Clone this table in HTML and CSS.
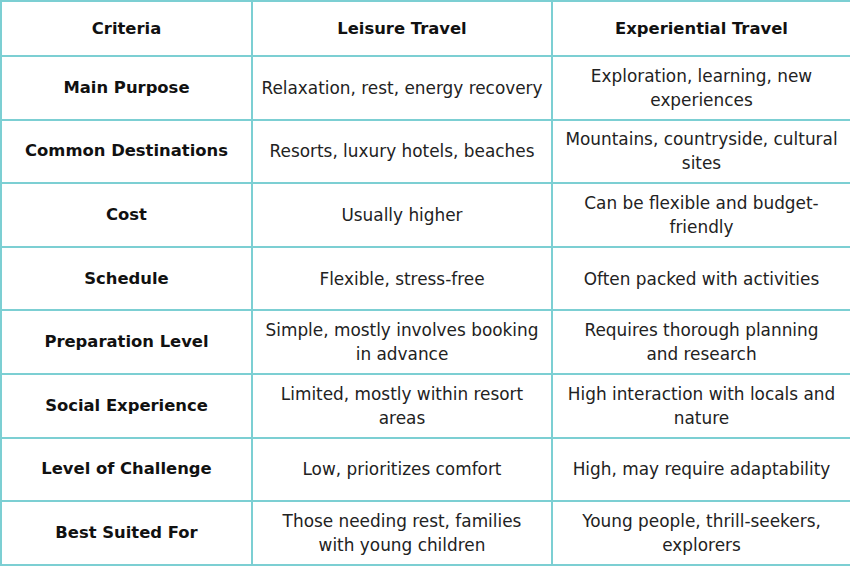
FILE: index.html
```html
<!DOCTYPE html>
<html>
<head>
<meta charset="utf-8">
<link rel="stylesheet" href="styles.css">
</head>
<body>
<table class="cmp">
  <colgroup><col class="c1"><col class="c2"><col class="c3"></colgroup>
  <thead>
    <tr class="head"><th>Criteria</th><th>Leisure Travel</th><th>Experiential Travel</th></tr>
  </thead>
  <tbody>
    <tr><th>Main Purpose</th><td>Relaxation, rest, energy recovery</td><td>Exploration, learning, new experiences</td></tr>
    <tr><th>Common Destinations</th><td>Resorts, luxury hotels, beaches</td><td>Mountains, countryside, cultural sites</td></tr>
    <tr><th>Cost</th><td>Usually higher</td><td>Can be flexible and budget-friendly</td></tr>
    <tr><th>Schedule</th><td>Flexible, stress-free</td><td>Often packed with activities</td></tr>
    <tr><th>Preparation Level</th><td>Simple, mostly involves booking in advance</td><td>Requires thorough planning and&nbsp;research</td></tr>
    <tr><th>Social Experience</th><td>Limited, mostly within resort areas</td><td>High interaction with locals and nature</td></tr>
    <tr><th>Level of Challenge</th><td>Low, prioritizes comfort</td><td>High, may require adaptability</td></tr>
    <tr><th>Best Suited For</th><td>Those needing rest, families with&nbsp;young children</td><td>Young people, thrill-seekers, explorers</td></tr>
  </tbody>
</table>
</body>
</html>
```

FILE: styles.css
```css
html, body { margin: 0; padding: 0; background: #fff; }
.cmp {
  width: 850px;
  border-collapse: collapse;
  table-layout: fixed;
  font-family: "DejaVu Sans", "Open Sans", sans-serif;
  font-size: 16.9px;
  line-height: 24px;
  color: #222;
}
.c1 { width: 251px; }
.c2 { width: 300px; }
.c3 { width: 299px; }
.cmp th, .cmp td {
  border: 2px solid #7ccfd3;
  text-align: center;
  vertical-align: middle;
  padding: 0 8px;
  height: 61.6px;
}
.cmp th { font-weight: bold; color: #111; font-size: 16.4px; }
.cmp td { font-weight: normal; }
.cmp .head th { height: 53px; }
```
